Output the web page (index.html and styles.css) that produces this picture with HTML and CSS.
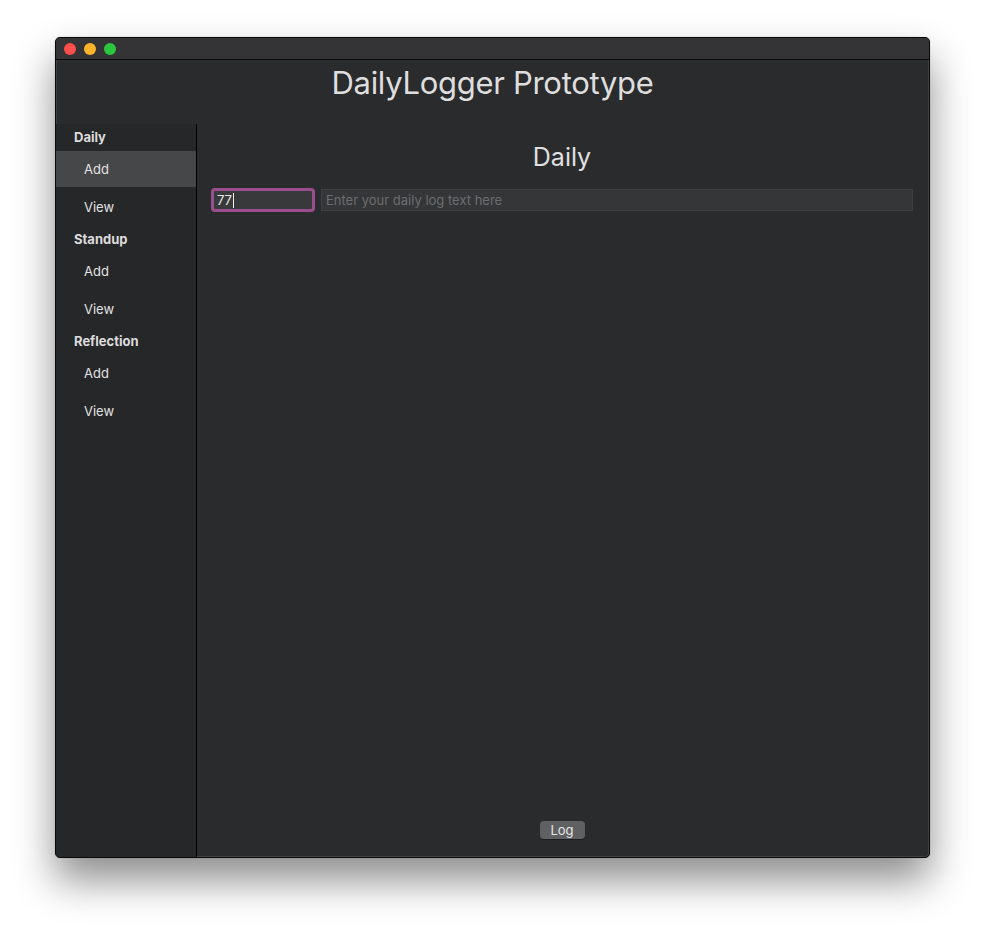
FILE: index.html
```html
<!DOCTYPE html>
<html>
<head>
<meta charset="utf-8">
<link rel="stylesheet" href="styles.css">
<title>DailyLogger Prototype</title>
</head>
<body>
<div class="window">
  <div class="titlebar">
    <span class="light red"></span>
    <span class="light yellow"></span>
    <span class="light green"></span>
  </div>
  <div class="apptitle">DailyLogger Prototype</div>
  <div class="content">
    <nav class="sidebar">
      <div class="group">Daily</div>
      <div class="item selected">Add</div>
      <div class="item">View</div>
      <div class="group">Standup</div>
      <div class="item">Add</div>
      <div class="item">View</div>
      <div class="group">Reflection</div>
      <div class="item">Add</div>
      <div class="item">View</div>
    </nav>
    <main class="main">
      <h1 class="heading">Daily</h1>
      <div class="fields">
        <div class="focusfield"><span class="value">77</span><span class="caret"></span></div>
        <div class="textfield">Enter your daily log text here</div>
      </div>
      <div class="spacer"></div>
      <div class="actions"><button class="logbtn">Log</button></div>
    </main>
  </div>
</div>
</body>
</html>
```
FILE: styles.css
```css
html, body {
  margin: 0;
  padding: 0;
  background: #ffffff;
}
body {
  font-family: Inter, "Liberation Sans", sans-serif;
  padding: 37px 0 0 55px;
  height: 931px;
  box-sizing: border-box;
  overflow: hidden;
}
.window {
  width: 875px;
  height: 821px;
  box-sizing: border-box;
  border: 1px solid #0b0b0c;
  border-radius: 5px;
  background: #2a2b2d;
  box-shadow: 0 22px 40px rgba(0,0,0,0.45), 0 0 1px rgba(0,0,0,0.5), inset 0 0 0 1px rgba(255,255,255,0.1);
  display: flex;
  flex-direction: column;
  overflow: hidden;
}
.titlebar {
  height: 21px;
  background: #343436;
  border-bottom: 1px solid #0c0c0d;
  display: flex;
  align-items: center;
  gap: 8px;
  padding-left: 8px;
  flex: none;
}
.light {
  width: 12px;
  height: 12px;
  border-radius: 50%;
  display: block;
}
.red { background: #fe4f4c; }
.yellow { background: #fdb42a; }
.green { background: #2ac73f; }
.apptitle {
  height: 64px;
  box-sizing: border-box;
  padding-top: 3px;
  text-align: center;
  color: #dedede;
  font-size: 31px;
  line-height: 40px;
  letter-spacing: -0.3px;
  flex: none;
}
.content {
  flex: 1;
  display: flex;
  min-height: 0;
}
.sidebar {
  width: 140px;
  flex: none;
  background: #262729;
  border-right: 1px solid #000;
  display: flex;
  flex-direction: column;
}
.group {
  height: 26px;
  line-height: 26px;
  padding-left: 18px;
  font-size: 13px;
  font-weight: 700;
  color: #dcdcdc;
}
.item {
  height: 36px;
  line-height: 36px;
  margin: 1px 0;
  padding-left: 28px;
  font-size: 13px;
  color: #e2e2e2;
}
.item.selected {
  background: #464749;
}
.main {
  flex: 1;
  display: flex;
  flex-direction: column;
  padding: 16px 16px 18px 14px;
  min-width: 0;
}
.heading {
  margin: 0;
  text-align: center;
  font-weight: 400;
  font-size: 25px;
  line-height: 34px;
  color: #e0e0e0;
}
.fields {
  margin-top: 14px;
  display: flex;
  align-items: center;
  gap: 6px;
}
.focusfield {
  width: 104px;
  height: 24px;
  box-sizing: border-box;
  border: 3px solid #9a4e8e;
  border-radius: 4px;
  background: #38393b;
  display: flex;
  align-items: center;
  padding-left: 3px;
  font-size: 13px;
  color: #e8e8e8;
  flex: none;
}
.caret {
  width: 1px;
  height: 15px;
  background: #f0f0f0;
  margin-left: 1px;
}
.textfield {
  flex: 1;
  height: 22px;
  box-sizing: border-box;
  border: 1px solid #3f4042;
  background: #353638;
  padding-left: 4px;
  font-size: 13px;
  line-height: 20px;
  color: #6c6d6f;
}
.spacer {
  flex: 1;
}
.actions {
  display: flex;
  justify-content: center;
}
.logbtn {
  width: 45px;
  height: 18px;
  padding: 0;
  border: none;
  border-radius: 4px;
  background: #5f6062;
  color: #e6e6e6;
  font-family: Inter, "Liberation Sans", sans-serif;
  font-size: 13px;
  line-height: 18px;
  box-shadow: 0 1px 0 rgba(0,0,0,0.3);
}
```
